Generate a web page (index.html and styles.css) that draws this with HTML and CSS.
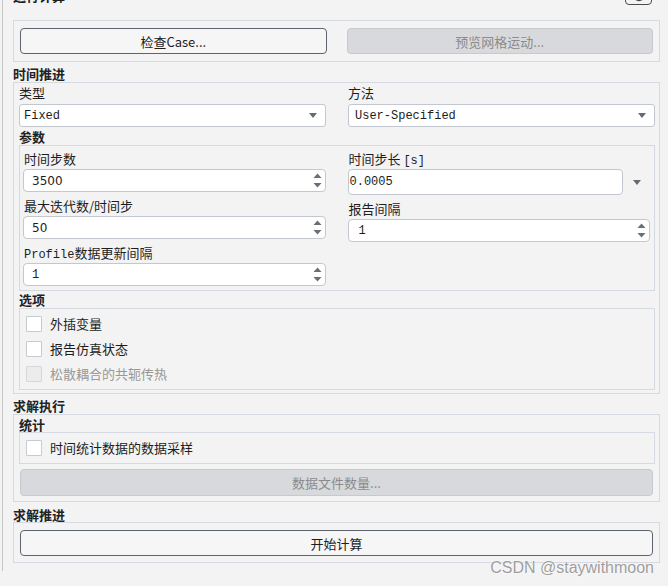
FILE: index.html
```html
<!DOCTYPE html>
<html lang="zh-CN">
<head>
<meta charset="utf-8">
<title>运行计算</title>
<link rel="stylesheet" href="styles.css">
</head>
<body>
<div class="frame">
  <div class="header">
    <span class="title">运行计算</span>
    <span class="help"><svg width="14" height="14" viewBox="0 0 14 14"><circle cx="7" cy="7" r="5.5" fill="none" stroke="#444" stroke-width="1.3"/></svg></span>
  </div>

  <div class="group g-actions">
    <button class="btn">检查Case...</button>
    <button class="btn disabled">预览网格运动...</button>
  </div>

  <div class="sec-label s-time">时间推进</div>
  <div class="group g-time">
    <div class="two-col">
      <div class="field">
        <div class="label">类型</div>
        <div class="combo"><span class="mono">Fixed</span><span class="caret"></span></div>
      </div>
      <div class="field">
        <div class="label">方法</div>
        <div class="combo combo-r"><span class="mono">User-Specified</span><span class="caret"></span></div>
      </div>
    </div>

    <div class="sub-label s-params">参数</div>
    <div class="group g-params">
      <div class="col">
        <div class="plabel">时间步数</div>
        <div class="spin"><span class="num">3500</span><span class="arrows"><svg width="9" height="17" viewBox="0 0 9 17"><polygon points="0.5,6 4.5,1.5 8.5,6" fill="#6a6f77"/><polygon points="0.5,11 4.5,15.5 8.5,11" fill="#6a6f77"/></svg></span></div>
        <div class="plabel gap">最大迭代数/时间步</div>
        <div class="spin"><span class="num">50</span><span class="arrows"><svg width="9" height="17" viewBox="0 0 9 17"><polygon points="0.5,6 4.5,1.5 8.5,6" fill="#6a6f77"/><polygon points="0.5,11 4.5,15.5 8.5,11" fill="#6a6f77"/></svg></span></div>
        <div class="plabel gap"><span class="mono-l">Profile</span>数据更新间隔</div>
        <div class="spin"><span class="num mono">1</span><span class="arrows"><svg width="9" height="17" viewBox="0 0 9 17"><polygon points="0.5,6 4.5,1.5 8.5,6" fill="#6a6f77"/><polygon points="0.5,11 4.5,15.5 8.5,11" fill="#6a6f77"/></svg></span></div>
      </div>
      <div class="col">
        <div class="plabel">时间步长 <span class="mono-u">[s]</span></div>
        <div class="step-row">
          <div class="step-input"><span class="mono">0.0005</span></div>
          <span class="caret ext"></span>
        </div>
        <div class="plabel gap">报告间隔</div>
        <div class="spin"><span class="num mono num-r">1</span><span class="arrows"><svg width="9" height="17" viewBox="0 0 9 17"><polygon points="0.5,6 4.5,1.5 8.5,6" fill="#6a6f77"/><polygon points="0.5,11 4.5,15.5 8.5,11" fill="#6a6f77"/></svg></span></div>
      </div>
    </div>

    <div class="sub-label s-opts">选项</div>
    <div class="group g-options">
      <label class="check"><span class="box"></span>外插变量</label>
      <label class="check"><span class="box"></span>报告仿真状态</label>
      <label class="check off"><span class="box"></span>松散耦合的共轭传热</label>
    </div>
  </div>

  <div class="sec-label s-solve">求解执行</div>
  <div class="group g-solve">
    <div class="sub-label s-stats">统计</div>
    <div class="group g-stats">
      <label class="check"><span class="box"></span>时间统计数据的数据采样</label>
    </div>
    <button class="btn disabled wide">数据文件数量...</button>
  </div>

  <div class="sec-label s-run">求解推进</div>
  <div class="group g-run">
    <button class="btn">开始计算</button>
  </div>
</div>
<div class="watermark">CSDN @staywithmoon</div>
</body>
</html>
```

FILE: styles.css
```css
* { box-sizing: border-box; }

html, body {
  margin: 0;
  padding: 0;
}

body {
  width: 668px;
  height: 586px;
  overflow: hidden;
  position: relative;
  background: #f3f3f3;
  color: #1d1d1d;
  font-family: "Noto Sans CJK SC", "Noto Sans", sans-serif;
  font-size: 13px;
}

.frame {
  margin-left: 2px;
  height: 586px;
  border-left: 1px solid #c4c4c4;
  padding-left: 10px;
}

.frame > * { width: 647px; }

.header {
  display: flex;
  justify-content: space-between;
  align-items: flex-end;
  height: 20px;
  margin-top: -15px;
}

.title {
  font-weight: bold;
  line-height: 18px;
}

.help {
  width: 27px;
  height: 20px;
  margin-right: 8px;
  border: 1px solid #4c4c4c;
  border-radius: 4px;
  display: flex;
  align-items: center;
  justify-content: center;
}

.group {
  border: 1px solid #d4d9e2;
}

.g-actions {
  margin-top: 15px;
  display: grid;
  grid-template-columns: 1fr 1fr;
  gap: 20px;
  padding: 7px 6px;
}

.btn {
  height: 26px;
  border: 1px solid #5d6470;
  border-radius: 4px;
  background: #f6f6f6;
  font-family: "Noto Sans CJK SC", "Noto Sans", sans-serif;
  font-size: 13px;
  color: #1d1d1d;
  padding: 0;
}

.btn.disabled {
  background: #d8d9dc;
  border-color: #c8c9cd;
  color: #8b8b8b;
}

.sec-label, .sub-label {
  font-weight: bold;
  line-height: 16px;
  height: 16px;
  color: #222;
}

.s-time { margin-top: 4px; }

.g-time {
  padding: 2px 4px 3px 5px;
}

.two-col {
  display: grid;
  grid-template-columns: 1fr 1fr;
  gap: 22px;
}

.label {
  line-height: 16px;
  height: 16px;
  margin-bottom: 3px;
}

.combo {
  height: 23px;
  background: #fff;
  border: 1px solid #c3c8d0;
  border-radius: 3px;
  display: flex;
  align-items: center;
  justify-content: space-between;
  padding: 0 8px 0 4px;
}

.combo-r { padding-left: 6px; }

.mono, .mono-l, .mono-u {
  font-family: "Liberation Mono", "DejaVu Sans Mono", monospace;
  font-size: 12px;
  line-height: 1;
}

.caret {
  width: 0;
  height: 0;
  border-left: 4.5px solid transparent;
  border-right: 4.5px solid transparent;
  border-top: 5px solid #656a72;
}

.s-params { margin-top: 2px; }

.g-params {
  display: grid;
  grid-template-columns: 1fr 1fr;
  gap: 22px;
  padding: 3px 4px 4px 3px;
}

.col {
  display: flex;
  flex-direction: column;
}

.plabel {
  line-height: 20px;
  height: 20px;
  padding-left: 1px;
  white-space: nowrap;
}

.plabel.gap { margin-top: 4px; }

.spin {
  height: 23px;
  background: #fff;
  border: 1px solid #c3c8d0;
  border-radius: 4px;
  display: flex;
  align-items: center;
  justify-content: space-between;
  padding: 0 3px 0 8px;
}

.num {
  font-family: "DejaVu Sans", "Noto Sans", sans-serif;
  font-size: 12px;
}

.num.mono {
  font-family: "Liberation Mono", monospace;
  font-size: 12px;
}

.num-r { padding-left: 2px; }

.arrows {
  display: flex;
}

.step-row {
  display: flex;
  align-items: center;
  height: 26px;
}

.step-input {
  width: 275px;
  height: 26px;
  background: #fff;
  border: 1px solid #c3c8d0;
  border-radius: 4px;
  display: flex;
  align-items: center;
  padding-left: 1px;
}

.caret.ext {
  margin-left: 10px;
}

.s-opts { margin-top: 1px; }

.g-options {
  padding: 2px 0 3px 6px;
}

.check {
  display: flex;
  align-items: center;
  height: 25px;
  gap: 8px;
}

.box {
  width: 16px;
  height: 16px;
  background: #fff;
  border: 1px solid #c6cad1;
  border-radius: 1px;
}

.check.off { color: #989898; }
.check.off .box { background: #ececec; border-color: #d5d7db; }

.s-solve { margin-top: 4px; }

.g-solve {
  padding: 2px 4px 5px 5px;
}

.s-stats { line-height: 15px; height: 15px; }

.g-stats {
  padding: 2px 0 3px 6px;
}

.wide {
  display: block;
  width: calc(100% - 3px);
  height: 27px;
  margin: 5px 0 0 1px;
}

.s-run { margin-top: 5px; line-height: 15px; height: 15px; }

.g-run {
  padding: 7px 6px 6px 6px;
  display: flex;
}

.g-run .btn { flex: 1; }

.watermark {
  position: absolute;
  right: 14px;
  top: 559px;
  font-family: "Liberation Sans", Arial, sans-serif;
  font-size: 16px;
  color: #9d9d9d;
  text-shadow: 0 0 2px #fff, 0 0 1px #fff;
}
```
